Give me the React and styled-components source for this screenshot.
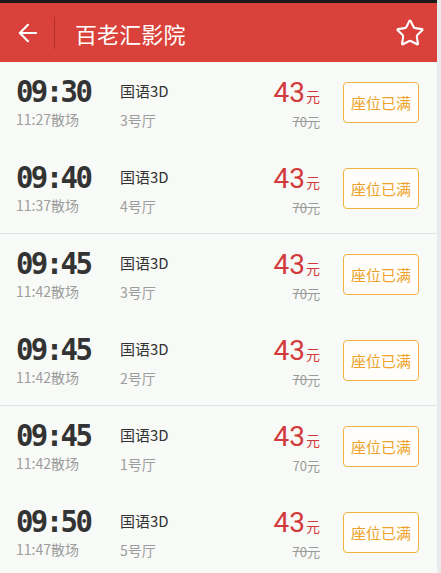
import styled, { createGlobalStyle } from 'styled-components';
import { ArrowLeft, Star } from 'lucide-react';

const GlobalStyle = createGlobalStyle`
  html, body {
    margin: 0;
    padding: 0;
    background: #e7ebee;
    font-family: "Noto Sans CJK SC", "Roboto", sans-serif;
  }
`;

const shows = [
  { time: '09:30', end: '11:27', hall: '3号厅' },
  { time: '09:40', end: '11:37', hall: '4号厅', divider: true },
  { time: '09:45', end: '11:42', hall: '3号厅' },
  { time: '09:45', end: '11:42', hall: '2号厅', divider: true },
  { time: '09:45', end: '11:42', hall: '1号厅', plain: true },
  { time: '09:50', end: '11:47', hall: '5号厅' },
];

//Component
const App = () => {
  return (
    <Page>
      <GlobalStyle />
      <StatusStrip />
      <Header>
        <IconButton>
          <ArrowLeft size={28} strokeWidth={1.8} />
        </IconButton>
        <Separator />
        <Title>百老汇影院</Title>
        <IconButton className='star'>
          <Star size={30} strokeWidth={1.7} />
        </IconButton>
      </Header>
      <List>
        {shows.map((s, i) => (
          <Row key={i} $divider={s.divider}>
            <TimeBlock>
              <Clock>{s.time}</Clock>
              <Sub>{s.end}散场</Sub>
            </TimeBlock>
            <InfoBlock>
              <Lang>国语3D</Lang>
              <Sub>{s.hall}</Sub>
            </InfoBlock>
            <PriceBlock>
              <Price>
                43<small>元</small>
              </Price>
              <OldPrice $plain={s.plain}>70元</OldPrice>
            </PriceBlock>
            <FullButton>座位已满</FullButton>
          </Row>
        ))}
      </List>
    </Page>
  );
};

const Page = styled.div`
  width: 437px;
  height: 573px;
  overflow: hidden;
  background: #f8faf7;
`;
const StatusStrip = styled.div`
  height: 3px;
  background: #1a1a1a;
`;
const Header = styled.div`
  height: 59px;
  background: #d9413a;
  display: flex;
  align-items: center;
  padding: 0 12px 0 14px;
  color: #fff;
  .star {
    margin-left: auto;
  }
`;
const IconButton = styled.div`
  display: flex;
  align-items: center;
  justify-content: center;
  color: #fff;
`;
const Separator = styled.div`
  width: 1px;
  height: 32px;
  margin: 0 20px 0 12px;
  background: #b2302b;
`;
const Title = styled.h1`
  margin: 0;
  font-size: 22px;
  font-weight: 400;
  letter-spacing: 0.1px;
`;
const List = styled.div`
  display: flex;
  flex-direction: column;
`;
const Row = styled.div`
  height: 86px;
  box-sizing: border-box;
  display: flex;
  align-items: flex-start;
  padding: 14px 18px 0 16px;
  border-bottom: 1px solid ${(p) => (p.$divider ? '#dfe3e3' : 'transparent')};
`;
const TimeBlock = styled.div`
  width: 104px;
  display: flex;
  flex-direction: column;
`;
const Clock = styled.div`
  font-family: "DejaVu Sans Mono", monospace;
  font-weight: 700;
  font-size: 29px;
  line-height: 30px;
  letter-spacing: -2.6px;
  color: #333;
  transform: scaleY(1.05);
  transform-origin: left top;
`;
const Sub = styled.div`
  font-size: 14px;
  line-height: 20px;
  margin-top: 3px;
  color: #9d9d9d;
`;
const InfoBlock = styled.div`
  display: flex;
  flex-direction: column;
  padding-top: 4px;
`;
const Lang = styled.div`
  font-size: 15px;
  line-height: 22px;
  margin-bottom: 5px;
  color: #333;
`;
const PriceBlock = styled.div`
  margin-left: auto;
  padding-top: 3px;
  display: flex;
  flex-direction: column;
  align-items: flex-end;
`;
const Price = styled.div`
  font-family: "Roboto", "Noto Sans CJK SC", sans-serif;
  font-size: 28px;
  line-height: 28px;
  color: #d23a3c;
  small {
    font-family: "Noto Sans CJK SC", sans-serif;
    font-size: 14px;
    margin-left: 1px;
  }
`;
const OldPrice = styled.div`
  font-size: 13px;
  line-height: 18px;
  margin-top: 3px;
  color: #9a9a9a;
  text-decoration: ${(p) => (p.$plain ? 'none' : 'line-through')};
`;
const FullButton = styled.div`
  width: 76px;
  height: 41px;
  box-sizing: border-box;
  margin: 6px 0 0 23px;
  display: flex;
  align-items: center;
  justify-content: center;
  border: 1.5px solid #f1b23f;
  border-radius: 4px;
  background: #fffefb;
  color: #eea22a;
  font-size: 15px;
`;

export default App;
